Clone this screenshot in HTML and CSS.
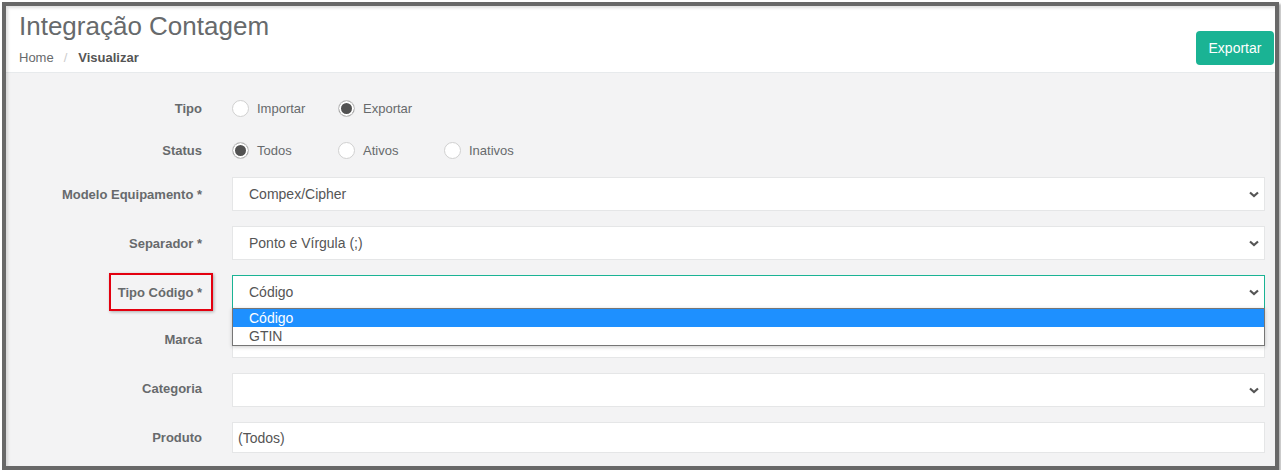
FILE: index.html
```html
<!DOCTYPE html>
<html lang="pt">
<head>
    <meta charset="UTF-8">
    <title>Integração Contagem</title>
    <link rel="stylesheet" href="styles.css">
</head>
<body>
<div class="frame">
    <div class="page-heading">
        <div class="heading-text">
            <h2>Integração Contagem</h2>
            <ol class="breadcrumb">
                <li>Home</li>
                <li class="active"><strong>Visualizar</strong></li>
            </ol>
        </div>
        <button type="button" class="btn-export">Exportar</button>
    </div>

    <form class="form" id="integracaoForm">
        <div class="row row-radio">
            <label class="labels">Tipo</label>
            <div class="options">
                <span class="option"><span class="radio"></span>Importar</span>
                <span class="option"><span class="radio checked"></span>Exportar</span>
            </div>
        </div>
        <div class="row row-radio last-radio">
            <label class="labels">Status</label>
            <div class="options">
                <span class="option"><span class="radio checked"></span>Todos</span>
                <span class="option"><span class="radio"></span>Ativos</span>
                <span class="option"><span class="radio"></span>Inativos</span>
            </div>
        </div>
        <div class="row">
            <label class="labels">Modelo Equipamento *</label>
            <div class="select">
                <span>Compex/Cipher</span>
                <svg class="chevron" width="10" height="7" viewBox="0 0 10 7"><polyline points="1,1.5 5,5 9,1.5" fill="none" stroke="#555" stroke-width="2.2"/></svg>
            </div>
        </div>
        <div class="row">
            <label class="labels">Separador *</label>
            <div class="select">
                <span>Ponto e Vírgula (;)</span>
                <svg class="chevron" width="10" height="7" viewBox="0 0 10 7"><polyline points="1,1.5 5,5 9,1.5" fill="none" stroke="#555" stroke-width="2.2"/></svg>
            </div>
        </div>
        <div class="row">
            <label class="labels"><span class="marked">Tipo Código *</span></label>
            <div class="select focused">
                <span>Código</span>
                <svg class="chevron" width="10" height="7" viewBox="0 0 10 7"><polyline points="1,1.5 5,5 9,1.5" fill="none" stroke="#555" stroke-width="2.2"/></svg>
                <ul class="dropdown">
                    <li class="selected">Código</li>
                    <li>GTIN</li>
                </ul>
            </div>
        </div>
        <div class="row lower">
            <label class="labels">Marca</label>
            <div class="select">
                <span></span>
                <svg class="chevron" width="10" height="7" viewBox="0 0 10 7"><polyline points="1,1.5 5,5 9,1.5" fill="none" stroke="#555" stroke-width="2.2"/></svg>
            </div>
        </div>
        <div class="row lower">
            <label class="labels">Categoria</label>
            <div class="select">
                <span></span>
                <svg class="chevron" width="10" height="7" viewBox="0 0 10 7"><polyline points="1,1.5 5,5 9,1.5" fill="none" stroke="#555" stroke-width="2.2"/></svg>
            </div>
        </div>
        <div class="row">
            <label class="labels" for="produto">Produto</label>
            <input type="text" id="produto" class="text-input" value="(Todos)">
        </div>
    </form>
</div>
</body>
</html>
```

FILE: styles.css
```css
body{
margin:0;
background-color:#fff;
font-family:"Liberation Sans", Arial, sans-serif;
color:#676a6c;
}

.frame{
position:relative;
box-sizing:border-box;
width:1277px;
height:468px;
margin:2px 0 0 2px;
border:4px solid #686868;
background-color:#f3f3f4;
box-shadow:2px 2px 2px rgba(0,0,0,0.3);
overflow:hidden;
}

.frame::after{
content:"";
position:absolute;
top:0;
left:0;
right:0;
bottom:0;
box-shadow:inset 2px 2px 3px rgba(0,0,0,0.12);
pointer-events:none;
}

.page-heading{
display:flex;
justify-content:space-between;
align-items:flex-start;
background-color:#fff;
border-bottom:1px solid #e7eaec;
padding:5px 1px 5px 13px;
}

.page-heading h2{
margin:0;
font-size:26px;
line-height:30px;
font-weight:normal;
color:#676a6c;
}

.breadcrumb{
display:flex;
list-style:none;
margin:8px 0 0 0;
padding:0;
font-size:13px;
line-height:18px;
color:#676a6c;
}

.breadcrumb li + li::before{
content:"/";
color:#ccc;
padding:0 11px 0 10px;
}

.breadcrumb strong{
color:#555;
}

.btn-export{
margin-top:20px;
width:78px;
height:34px;
border:none;
border-radius:4px;
background-color:#1ab394;
color:#fff;
font-family:inherit;
font-size:14px;
padding:0;
}

.form{
margin:0;
padding:21px 10px 0 0;
}

.row{
display:grid;
grid-template-columns:196px 1fr;
column-gap:30px;
align-items:center;
margin-bottom:15px;
}

.row.lower .labels{
padding-bottom:3px;
}

.row-radio{
height:28px;
margin-bottom:14px;
}

.row-radio.last-radio{
margin-bottom:13px;
}

.labels{
text-align:right;
font-size:13px;
font-weight:bold;
color:#676a6c;
}

.marked{
position:relative;
}

.marked::after{
content:"";
position:absolute;
top:-12px;
bottom:-11px;
left:-9px;
right:-11px;
border:2px solid #e3000f;
box-shadow:1px 1px 3px rgba(0,0,0,0.3);
}

.options{
display:flex;
align-items:center;
}

.option{
display:flex;
align-items:center;
width:106px;
font-size:13px;
color:#676a6c;
}

.radio{
box-sizing:border-box;
width:17px;
height:17px;
margin-right:8px;
border:1px solid #d0d0d0;
border-radius:50%;
background-color:#fff;
}

.radio.checked{
background-color:#525252;
box-shadow:inset 0 0 0 2px #fff;
}

.select{
position:relative;
box-sizing:border-box;
height:34px;
display:flex;
align-items:center;
justify-content:space-between;
padding:0 5px 0 16px;
background-color:#fff;
border:1px solid #e5e6e7;
font-size:14px;
color:#555;
}

.select.focused{
border-color:#1ab394;
}

.chevron{
display:block;
}

.dropdown{
position:absolute;
top:32px;
left:-1px;
right:-1px;
margin:0;
padding:0;
list-style:none;
background-color:#fff;
border:1px solid #767676;
box-shadow:0 1px 4px rgba(0,0,0,0.2);
z-index:2;
}

.dropdown li{
height:18px;
line-height:18px;
padding-left:16px;
font-size:14px;
color:#555;
}

.dropdown li.selected{
background-color:#1e90ff;
color:#fff;
}

.text-input{
box-sizing:border-box;
height:31px;
padding:0 5px;
margin:0;
border:1px solid #e5e6e7;
background-color:#fff;
font-family:inherit;
font-size:14px;
color:#555;
}
```
